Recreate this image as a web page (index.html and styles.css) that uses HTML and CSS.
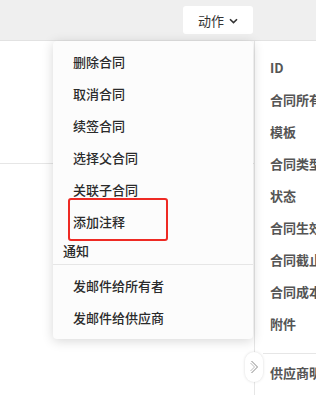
FILE: index.html
```html
<!DOCTYPE html>
<html lang="zh">
<head>
  <meta charset="UTF-8">
  <meta name="viewport" content="width=device-width, initial-scale=1.0">
  <title>合同 – 动作</title>
  <link rel="stylesheet" href="styles.css">
</head>
<body>

  <div class="topbar">
    <button class="action-btn">动作
      <svg class="chev" width="9" height="6" viewBox="0 0 9 6"><path d="M1 1.2 L4.5 4.6 L8 1.2" fill="none" stroke="#333" stroke-width="1.6"/></svg>
    </button>
  </div>

  <div class="main">
    <div class="left">
      <div class="left-block"></div>
    </div>

    <div class="side">
      <div class="side-row">ID</div>
      <div class="side-row">合同所有者</div>
      <div class="side-row">模板</div>
      <div class="side-row">合同类型</div>
      <div class="side-row">状态</div>
      <div class="side-row">合同生效日期</div>
      <div class="side-row">合同截止日期</div>
      <div class="side-row">合同成本</div>
      <div class="side-row">附件</div>
      <div class="side-divider"></div>
      <div class="side-row side-sub">供应商明细</div>
    </div>

    <div class="menu">
      <div class="menu-item">删除合同</div>
      <div class="menu-item">取消合同</div>
      <div class="menu-item">续签合同</div>
      <div class="menu-item">选择父合同</div>
      <div class="menu-item">关联子合同</div>
      <div class="menu-item">添加注释</div>
      <div class="menu-header">通知</div>
      <div class="menu-group">
        <div class="menu-item">发邮件给所有者</div>
        <div class="menu-item">发邮件给供应商</div>
      </div>
      <div class="highlight"></div>
    </div>

    <div class="collapse">
      <svg width="9" height="14" viewBox="0 0 9 14"><path d="M1.5 1 L7.5 7 L1.5 13" fill="none" stroke="#888" stroke-width="1"/><path d="M0.5 3 L4.5 7 L0.5 11" fill="none" stroke="#aaa" stroke-width="0.8"/></svg>
    </div>
  </div>

</body>
</html>
```

FILE: styles.css
```css
body {
  margin: 0;
  font-family: "Noto Sans CJK SC", "Noto Sans", sans-serif;
  font-size: 13px;
  color: #333;
  background-color: #fff;
  overflow: hidden;
}

.topbar {
  height: 40px;
  background-color: #efefef;
  border-bottom: 1px solid #e2e2e2;
  display: flex;
  align-items: center;
  justify-content: flex-end;
  padding-right: 63px;
}

.action-btn {
  width: 70px;
  height: 28px;
  background-color: #fff;
  border: none;
  border-radius: 3px;
  font-family: inherit;
  font-size: 13px;
  color: #333;
  display: flex;
  align-items: center;
  justify-content: center;
  gap: 5px;
  padding: 0;
}

.chev {
  margin-top: 1px;
}

.main {
  position: relative;
  display: flex;
  height: 354px;
}

.left {
  flex: 1;
}

.left-block {
  height: 122px;
  border-bottom: 1px solid #e6e6e6;
}

.side {
  width: 61px;
  border-left: 1px solid #e6e6e6;
  padding-top: 11px;
  overflow: hidden;
}

.side-row {
  height: 32px;
  line-height: 32px;
  padding-left: 15px;
  font-weight: bold;
  color: #555;
  white-space: nowrap;
}

.side-divider {
  height: 1px;
  background-color: #e6e6e6;
  margin: 13px 0 3px 8px;
}

.menu {
  position: absolute;
  left: 53px;
  top: 0;
  width: 200px;
  padding: 5px 0;
  background-color: #fcfcfc;
  border-radius: 4px;
  box-shadow: 0 2px 12px rgba(0, 0, 0, 0.16);
}

.menu-item {
  height: 32px;
  line-height: 32px;
  padding-left: 20px;
  font-weight: 500;
  color: #2b2b2b;
  white-space: nowrap;
}

.menu-header {
  height: 26px;
  line-height: 26px;
  padding-left: 10px;
  font-weight: 500;
  color: #2b2b2b;
  border-bottom: 1px solid #e6e6e6;
}

.menu-group {
  padding-top: 5px;
}

.highlight {
  position: absolute;
  left: 15px;
  top: 157px;
  width: 96px;
  height: 39px;
  border: 2px solid #ee2a24;
  border-radius: 3px;
}

.collapse {
  position: absolute;
  left: 245px;
  top: 311px;
  width: 18px;
  height: 30px;
  background-color: #fff;
  border-radius: 9px;
  box-shadow: 0 0 3px rgba(0, 0, 0, 0.15);
  display: flex;
  align-items: center;
  justify-content: center;
}
```
